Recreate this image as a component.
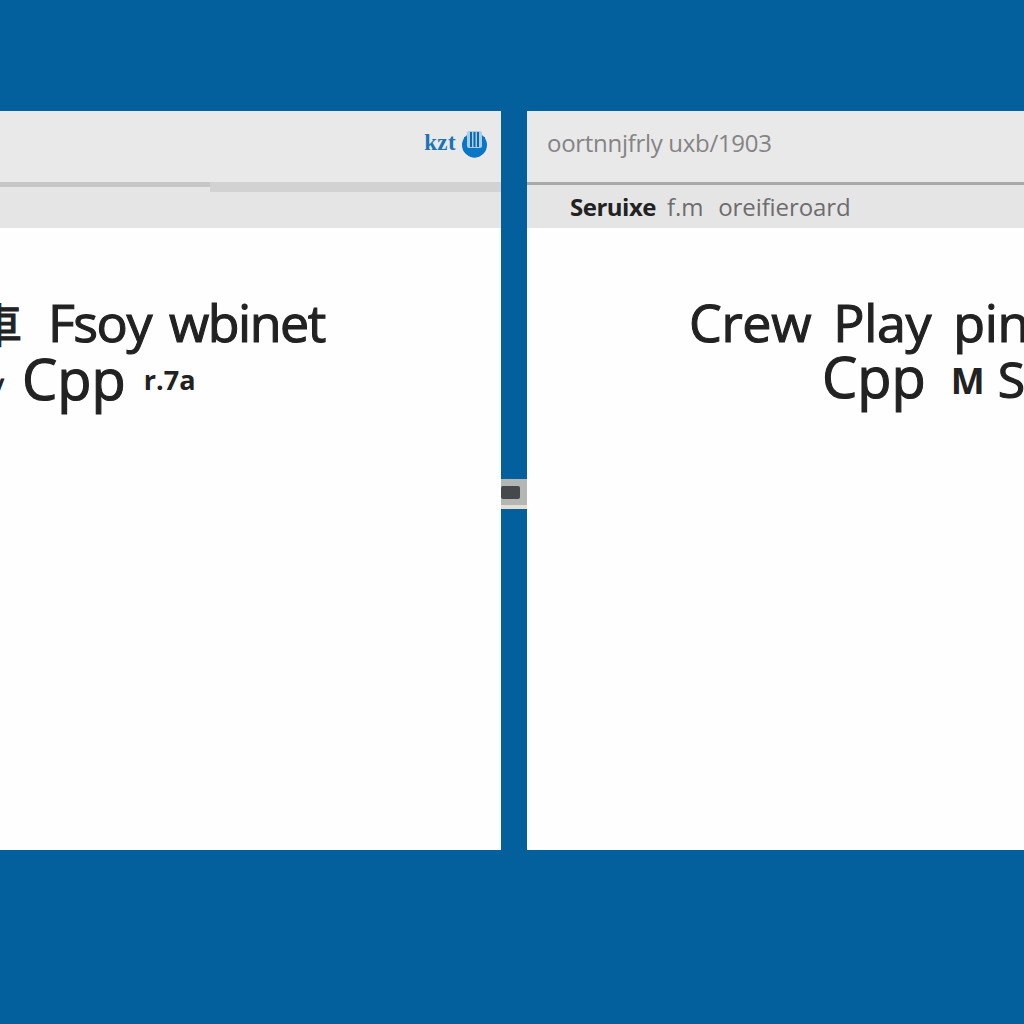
<div class="page">
  <section class="panel left">
    <header class="top end">
      <span class="link">kzt</span>
      <svg class="badge" width="25" height="30" viewBox="0 0 25 30" aria-hidden="true">
        <circle cx="12.5" cy="16" r="12.5" fill="#0a76c4" />
        <path d="M2 8h21v10a10 10 0 0 1-21 0z" fill="#0a76c4" />
        <rect x="5" y="2" width="15" height="17" rx="2" fill="#a9cdea" />
        <path d="M9 3v15M12.5 3v15M16 3v15" stroke="#0a68ad" stroke-width="2" />
      </svg>
    </header>
    <div class="rule split"><i class="thin"></i><i class="thick"></i></div>
    <div class="sub"></div>
    <div class="body">
      <h2 class="line l1"><span class="mark">車</span><span class="gap">Fsoy wbinet</span></h2>
      <h2 class="line l2"><span class="tick">/</span><span class="cpp">Cpp</span><small>r.7a</small></h2>
    </div>
  </section>

  <div class="gutter"><div class="handle"><i></i></div></div>

  <section class="panel right">
    <header class="top">
      <span class="crumb">oortnnjfrly uxb/1903</span>
    </header>
    <div class="rule dark"></div>
    <div class="sub pad">
      <b>Seruixe</b><span class="f">f.m</span><span class="o">oreifieroard</span>
    </div>
    <div class="body">
      <h2 class="line r1">Crew Play pin</h2>
      <h2 class="line r2"><span>Cpp</span><span class="m">M</span><span class="s">S</span></h2>
    </div>
  </section>
</div>

<style>
  :global(body) {
    margin: 0;
    background: #045f9d;
  }
  .page {
    height: 1024px;
    box-sizing: border-box;
    padding: 111px 0 174px;
    display: flex;
    font-family: "Open Sans", "Noto Sans CJK SC", sans-serif;
    overflow: hidden;
  }
  .panel {
    min-width: 0;
    display: flex;
    flex-direction: column;
    background: #fefefe;
    overflow: hidden;
  }
  .left {
    flex: 0 0 501px;
  }
  .right {
    flex: 1 1 0;
  }
  .gutter {
    flex: 0 0 26px;
    padding-top: 368px;
  }
  .handle {
    height: 30px;
    background: linear-gradient(#b4b6b4 0 26px, #e4dfd0 26px);
    display: flex;
    align-items: center;
  }
  .handle i {
    width: 19px;
    height: 13px;
    background: #46494c;
    border-radius: 2px;
    margin-bottom: 3px;
  }
  .top {
    height: 71px;
    flex: none;
    background: #e9e9e9;
    display: flex;
    align-items: center;
    padding: 0 20px 9px;
    box-sizing: border-box;
  }
  .top.end {
    justify-content: flex-end;
    padding: 0 14px 6px 0;
    gap: 6px;
  }
  .link {
    color: #1b73b8;
    font-size: 23px;
    line-height: 1;
    font-family: "Liberation Serif", serif;
    font-weight: 700;
    letter-spacing: 0.4px;
    margin-bottom: 3px;
  }
  .badge {
    display: block;
  }
  .crumb {
    color: #848484;
    font-size: 24px;
    letter-spacing: -0.3px;
    white-space: nowrap;
  }
  .rule {
    flex: none;
  }
  .rule.dark {
    background: #a9a9a9;
    height: 3px;
  }
  .split {
    display: flex;
    height: 10px;
    align-items: flex-start;
    background: #e6e6e6;
  }
  .split .thin {
    width: 210px;
    height: 5px;
    background: #c6c6c6;
  }
  .split .thick {
    flex: 1;
    height: 10px;
    background: #d2d2d2;
  }
  .sub {
    flex: none;
    height: 36px;
    background: #e5e5e5;
  }
  .sub.pad {
    height: 43px;
    padding-left: 43px;
    display: flex;
    align-items: center;
    font-size: 24px;
    color: #6d6d6d;
    white-space: nowrap;
    box-sizing: border-box;
    letter-spacing: -0.1px;
  }
  .sub b {
    color: #222;
    font-size: 24px;
    font-weight: 700;
    letter-spacing: -0.5px;
  }
  .f {
    margin-left: 11px;
  }
  .o {
    margin-left: 15px;
  }
  .body {
    flex: 1;
    padding-top: 65px;
    color: #222;
  }
  .line {
    margin: 0;
    font-weight: 400;
    font-size: 52px;
    line-height: 58px;
    white-space: nowrap;
    -webkit-text-stroke: 1.1px #222;
  }
  .l1 {
    letter-spacing: -1.5px;
    word-spacing: 6px;
  }
  .mark {
    display: inline-block;
    margin-left: -24px;
    font-size: 46px;
    width: 46px;
    letter-spacing: 0;
  }
  .gap {
    margin-left: 26px;
  }
  .l2,
  .r2 {
    display: flex;
    align-items: baseline;
    font-size: 56px;
    line-height: 50px;
  }
  .tick {
    width: 21px;
    font-size: 30px;
    margin-left: -7px;
    text-align: left;
    margin-right: 8px;
  }
  .line small {
    font-size: 27px;
    font-weight: 700;
    margin-left: 18px;
    -webkit-text-stroke: 0;
    position: relative;
    top: -10px;
  }
  .r1 {
    padding-left: 162px;
    letter-spacing: -0.35px;
    word-spacing: 9px;
  }
  .r2 {
    padding-left: 295px;
  }
  .m {
    font-size: 36px;
    font-weight: 700;
    margin-left: 25px;
    -webkit-text-stroke: 0;
    position: relative;
    top: -4px;
  }
  .s {
    margin-left: 13px;
    font-size: 50px;
  }
</style>
